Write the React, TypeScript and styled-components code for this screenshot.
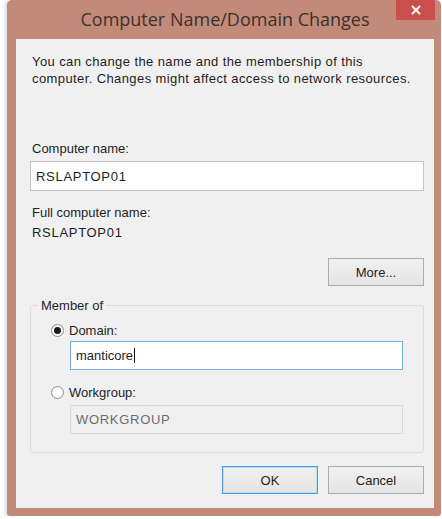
import React from "react";
import styled, { createGlobalStyle } from "styled-components";

const GlobalStyle = createGlobalStyle`
  html, body {
    margin: 0;
    padding: 0;
    background: #ffffff;
  }
  body {
    font-family: "Liberation Sans", Arial, sans-serif;
    font-size: 13px;
    color: #1e1e1e;
  }
`;

const Window = styled.div`
  margin-left: 7px;
  width: 434px;
  height: 516px;
  box-sizing: border-box;
  background: #c28b79;
  border-radius: 5px 5px 3px 3px;
  display: flex;
  flex-direction: column;
  padding: 0 7px 8px 9px;
  box-shadow: -2px 0 3px rgba(0, 0, 0, 0.15);
`;

const TitleBar = styled.div`
  position: relative;
  height: 39px;
  display: flex;
  align-items: center;
  justify-content: center;
`;

const Title = styled.div`
  font-family: "Open Sans", "Noto Sans", sans-serif;
  font-size: 18px;
  color: #3d302b;
  margin-top: -1px;
`;

const CloseButton = styled.div`
  position: absolute;
  top: 0;
  right: -1px;
  width: 39px;
  height: 20px;
  background: #c9504c;
  display: flex;
  align-items: center;
  justify-content: center;
`;

const Client = styled.div`
  flex: 1;
  background: #f0f0f0;
  padding: 14px 10px 0 14px;
  display: flex;
  flex-direction: column;
`;

const Text = styled.div<{ $top?: number; $caps?: boolean }>`
  padding-left: 2px;
  line-height: 17px;
  margin-top: ${(p) => p.$top ?? 0}px;
  letter-spacing: ${(p) => (p.$caps ? "0.7px" : "0")};
`;

const Intro = styled(Text)`
  margin-bottom: 53px;
  letter-spacing: 0.4px;
`;

const Field = styled.div<{
  $focus?: boolean;
  $disabled?: boolean;
  $h?: number;
  $m?: string;
}>`
  box-sizing: border-box;
  height: ${(p) => p.$h ?? 30}px;
  margin: ${(p) => p.$m ?? "4px 0 13px"};
  padding: 0 5px;
  display: flex;
  align-items: center;
  background: ${(p) => (p.$disabled ? "#f0f0f0" : "#ffffff")};
  color: ${(p) => (p.$disabled ? "#6d6d6d" : "#1e1e1e")};
  border: 1px solid
    ${(p) => (p.$focus ? "#7aafe3" : p.$disabled ? "#d9d9d9" : "#c4c4c4")};
`;

const Caps = styled.span`
  letter-spacing: 0.7px;
`;

const Caret = styled.span`
  display: inline-block;
  width: 1px;
  height: 15px;
  background: #000;
  margin-left: 1px;
`;

const ButtonRow = styled.div<{ $top: number }>`
  display: flex;
  justify-content: flex-end;
  gap: 10px;
  margin-top: ${(p) => p.$top}px;
`;

const Button = styled.div<{ $default?: boolean }>`
  width: 96px;
  height: 28px;
  box-sizing: border-box;
  display: flex;
  align-items: center;
  justify-content: center;
  color: #1e1e1e;
  background: linear-gradient(#f0f0f0, #e5e5e5);
  border: 1px solid ${(p) => (p.$default ? "#4d9be0" : "#acacac")};
  box-shadow: ${(p) => (p.$default ? "inset 0 0 0 1px #bcdcf5" : "none")};
`;

const GroupBox = styled.div`
  position: relative;
  margin-top: 19px;
  height: 148px;
  box-sizing: border-box;
  border: 1px solid #dcdcdc;
  border-radius: 3px;
  padding: 14px 20px 0 20px;
  display: flex;
  flex-direction: column;
`;

const Legend = styled.span`
  position: absolute;
  top: -9px;
  left: 7px;
  padding: 0 3px;
  background: #f0f0f0;
  line-height: 17px;
`;

const RadioRow = styled.div`
  display: flex;
  align-items: center;
  gap: 5px;
  height: 20px;
`;

const RadioDot = styled.span<{ $checked?: boolean }>`
  width: 13px;
  height: 13px;
  box-sizing: border-box;
  border-radius: 50%;
  border: 1px solid #8f8f8f;
  background: radial-gradient(circle, #ffffff 40%, #e8e8e8 100%);
  display: flex;
  align-items: center;
  justify-content: center;
  &::after {
    content: "";
    display: ${(p) => (p.$checked ? "block" : "none")};
    width: 7px;
    height: 7px;
    border-radius: 50%;
    background: #1a1a1a;
  }
`;

const Indented = styled.div`
  padding-left: 19px;
`;

export default function App() {
  return (
    <>
      <GlobalStyle />
      <Window>
        <TitleBar>
          <Title>Computer Name/Domain Changes</Title>
          <CloseButton>
            <svg width="10" height="10" viewBox="0 0 10 10">
              <path d="M1 1 L9 9 M9 1 L1 9" stroke="#fff" strokeWidth="2" />
            </svg>
          </CloseButton>
        </TitleBar>
        <Client>
          <Intro>
            You can change the name and the membership of this
            <br />
            computer. Changes might affect access to network resources.
          </Intro>
          <Text>Computer name:</Text>
          <Field>
            <Caps>RSLAPTOP01</Caps>
          </Field>
          <Text>Full computer name:</Text>
          <Text $top={3} $caps>
            RSLAPTOP01
          </Text>
          <ButtonRow $top={17}>
            <Button>More...</Button>
          </ButtonRow>
          <GroupBox>
            <Legend>Member of</Legend>
            <RadioRow>
              <RadioDot $checked />
              Domain:
            </RadioRow>
            <Indented>
              <Field $focus $h={29} $m="1px 0 12px">
                manticore
                <Caret />
              </Field>
            </Indented>
            <RadioRow>
              <RadioDot />
              Workgroup:
            </RadioRow>
            <Indented>
              <Field $disabled $h={29} $m="3px 0 0">
                <Caps>WORKGROUP</Caps>
              </Field>
            </Indented>
          </GroupBox>
          <ButtonRow $top={13}>
            <Button $default>OK</Button>
            <Button>Cancel</Button>
          </ButtonRow>
        </Client>
      </Window>
    </>
  );
}
